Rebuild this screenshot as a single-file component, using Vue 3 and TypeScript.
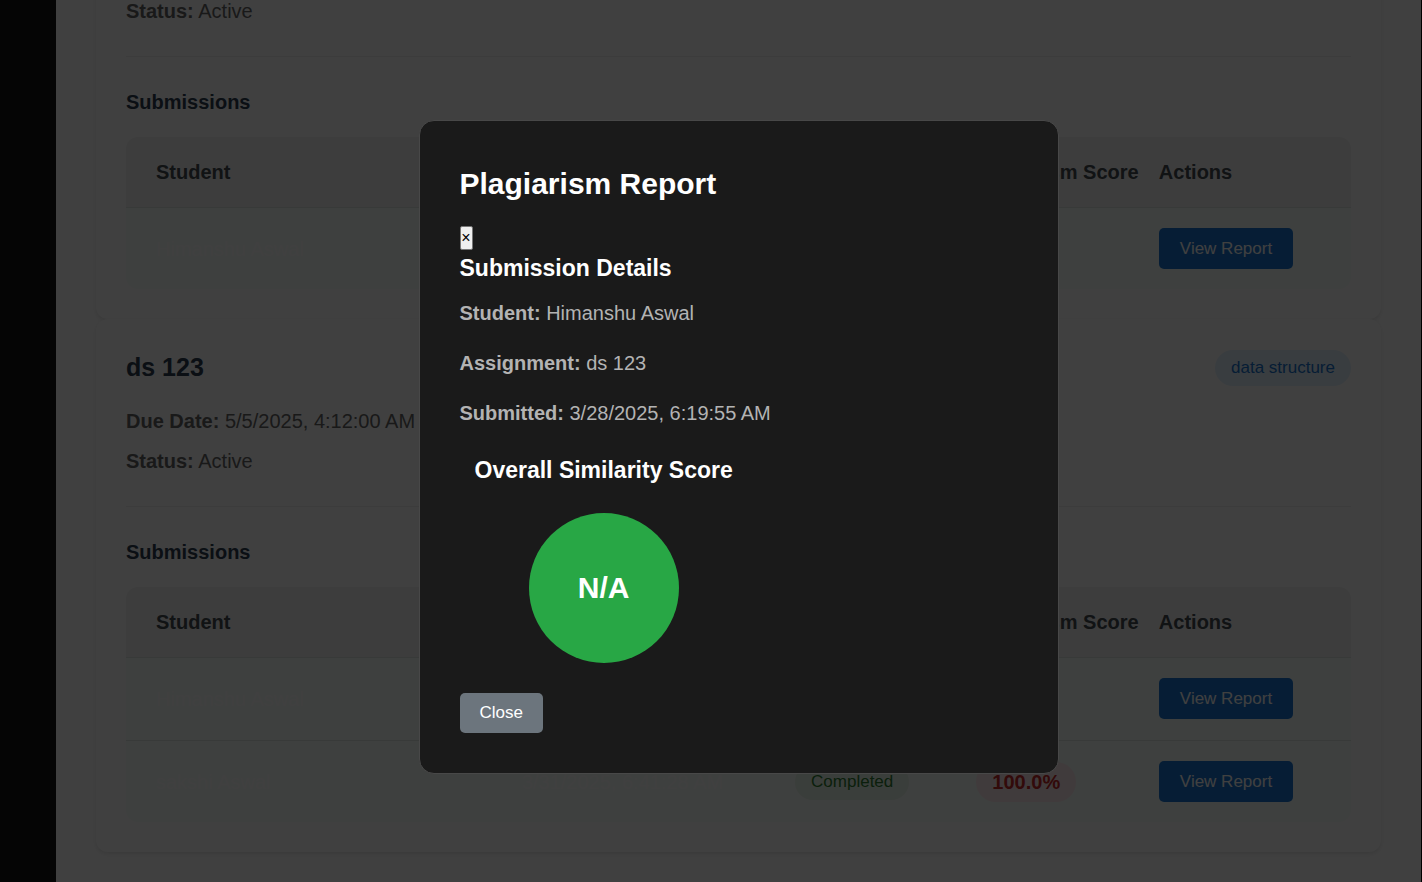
<script setup lang="ts">
import { ref } from 'vue'

interface Submission {
  student: string
  submitted: string
  status: string
  score: string
}

interface Assignment {
  id: number
  title?: string
  subject?: string
  due?: string
  status: string
  submissions: Submission[]
}

const assignments: Assignment[] = [
  {
    id: 1,
    status: 'Active',
    submissions: [
      { student: 'Himanshu Aswal', submitted: '3/28/2025, 6:19:55 AM', status: 'Completed', score: '0.0%' },
    ],
  },
  {
    id: 2,
    title: 'ds 123',
    subject: 'data structure',
    due: '5/5/2025, 4:12:00 AM',
    status: 'Active',
    submissions: [
      { student: 'Himanshu Aswal', submitted: '3/28/2025, 6:19:55 AM', status: 'Completed', score: '0.0%' },
      { student: 'sakshi Aswal', submitted: '3/31/2025, 6:41:28 AM', status: 'Completed', score: '100.0%' },
    ],
  },
]

const reportOpen = ref(true)
</script>

<template>
  <div class="shell">
    <aside class="sidebar"></aside>
    <main class="content">
      <section v-for="item in assignments" :key="item.id" class="card">
        <header v-if="item.title" class="card-head">
          <h2>{{ item.title }}</h2>
          <span class="subject">{{ item.subject }}</span>
        </header>
        <div class="meta">
          <p v-if="item.due"><strong>Due Date:</strong> {{ item.due }}</p>
          <p><strong>Status:</strong> {{ item.status }}</p>
        </div>
        <div class="submissions">
          <h3>Submissions</h3>
          <table>
            <colgroup>
              <col class="col-student" />
              <col class="col-date" />
              <col class="col-status" />
              <col class="col-score" />
              <col class="col-actions" />
            </colgroup>
            <thead>
              <tr>
                <th>Student</th>
                <th>Submitted</th>
                <th>Status</th>
                <th>Plagiarism Score</th>
                <th>Actions</th>
              </tr>
            </thead>
            <tbody>
              <tr v-for="row in item.submissions" :key="row.student">
                <td>{{ row.student }}</td>
                <td>{{ row.submitted }}</td>
                <td><span class="status">{{ row.status }}</span></td>
                <td><span class="score">{{ row.score }}</span></td>
                <td><button type="button" class="view" @click="reportOpen = true">View Report</button></td>
              </tr>
            </tbody>
          </table>
        </div>
      </section>
    </main>
  </div>

  <div v-if="reportOpen" class="overlay">
    <div class="modal" role="dialog" aria-modal="true" aria-labelledby="report-title">
      <h2 id="report-title">Plagiarism Report</h2>
      <button type="button" class="dismiss" aria-label="Dismiss" @click="reportOpen = false">×</button>
      <h3>Submission Details</h3>
      <div class="details">
        <p><strong>Student:</strong> Himanshu Aswal</p>
        <p><strong>Assignment:</strong> ds 123</p>
        <p><strong>Submitted:</strong> 3/28/2025, 6:19:55 AM</p>
      </div>
      <div class="similarity">
        <h3>Overall Similarity Score</h3>
        <div class="circle">N/A</div>
      </div>
      <button type="button" class="close" @click="reportOpen = false">Close</button>
    </div>
  </div>
</template>

<style>
body {
  margin: 0;
  background: #000;
  overflow: hidden;
}
</style>

<style scoped>
.shell,
.overlay {
  font-family: "Liberation Sans", Arial, sans-serif;
  font-size: 20px;
  line-height: 30px;
}

h2,
h3,
p {
  margin: 0;
}

.shell {
  display: flex;
  align-items: flex-end;
  height: 100vh;
  overflow: hidden;
}

.sidebar {
  flex: none;
  align-self: stretch;
  width: 56px;
  background: #141414;
}

.content {
  flex: 1;
  box-sizing: border-box;
  margin-right: 1px;
  padding: 30px 40px;
  background: #fff;
}

.card {
  padding: 30px;
  border-radius: 12px;
  background: #fff;
  box-shadow: 0 2px 4px rgba(0, 0, 0, 0.1);
}

.card-head {
  display: flex;
  justify-content: space-between;
  align-items: center;
  margin-bottom: 20px;
}

.card-head h2 {
  color: #2c3e50;
  font-size: 25px;
  line-height: 37px;
}

.subject {
  padding: 3px 16px;
  border-radius: 20px;
  background: #e3f2fd;
  color: #1976d2;
  font-size: 17px;
}

.meta {
  display: grid;
  gap: 10px;
  margin-bottom: 30px;
  color: #666;
}

.submissions {
  padding-top: 30px;
  border-top: 1px solid #eee;
}

.submissions h3 {
  margin-bottom: 20px;
  color: #2c3e50;
  font-size: 20px;
}

table {
  width: 100%;
  table-layout: fixed;
  border-collapse: separate;
  border-spacing: 0;
  border-radius: 12px;
  overflow: hidden;
  background: #f7fefa;
}

.col-student {
  width: 31.5%;
}

.col-date {
  width: 22.3%;
}

.col-status {
  width: 14.8%;
}

.col-score {
  width: 14.9%;
}

.col-actions {
  width: 16.5%;
}

th {
  padding: 20px 10px;
  background: #f3f3f3;
  border-bottom: 1px solid #dfe6e3;
  color: #444b52;
  text-align: left;
  white-space: nowrap;
}

td {
  padding: 20px 10px 21px;
  border-bottom: 1px solid #dfe6e3;
  color: #fff;
  white-space: nowrap;
}

th:first-child,
td:first-child {
  padding-left: 30px;
}

tr:last-child td {
  padding-bottom: 20px;
  border-bottom: 0;
}

.status,
.score {
  display: inline-block;
  border-radius: 20px;
}

.status {
  padding: 3px 16px;
  background: #e8f5e9;
  color: #2e7d32;
  font-size: 17px;
}

.score {
  padding: 5px 16px;
  background: #ffebee;
  color: #c62828;
  font-weight: bold;
}

.view,
.close {
  display: block;
  border: 0;
  border-radius: 5px;
  color: #fff;
  font-family: inherit;
  font-size: 17px;
}

.view {
  padding: 10px 21px;
  background: #1976d2;
  line-height: 21px;
}

.overlay {
  position: fixed;
  inset: 0;
  display: flex;
  justify-content: center;
  align-items: center;
  padding: 11px 1px 0 56px;
  background: rgba(0, 0, 0, 0.75);
}

.modal {
  box-sizing: border-box;
  width: 640px;
  padding: 40px;
  border: 1px solid #484848;
  border-radius: 15px;
  background: #1a1a1a;
  color: #b3b3b3;
}

.modal h2,
.modal h3 {
  color: #fff;
}

.modal h2 {
  margin-bottom: 20px;
  font-size: 30px;
  line-height: 45px;
}

.modal h3 {
  font-size: 23px;
  line-height: 36px;
}

.dismiss {
  display: block;
  box-sizing: border-box;
  width: 13px;
  height: 24px;
  padding: 0;
  border: 1px solid #767676;
  border-radius: 2px;
  background: #efefef;
  color: #000;
  font-family: inherit;
  font-size: 16px;
  line-height: 20px;
}

.details {
  display: grid;
  gap: 20px;
  margin: 12px 0 24px;
}

.similarity {
  display: flex;
  flex-direction: column;
  align-items: center;
  gap: 25px;
  width: fit-content;
  margin: 0 15px 30px;
}

.circle {
  display: flex;
  justify-content: center;
  align-items: center;
  width: 150px;
  height: 150px;
  border-radius: 50%;
  background: #28a745;
  color: #fff;
  font-size: 30px;
  font-weight: bold;
}

.close {
  padding: 10px 20px;
  background: #6c757d;
  line-height: 20px;
}
</style>
